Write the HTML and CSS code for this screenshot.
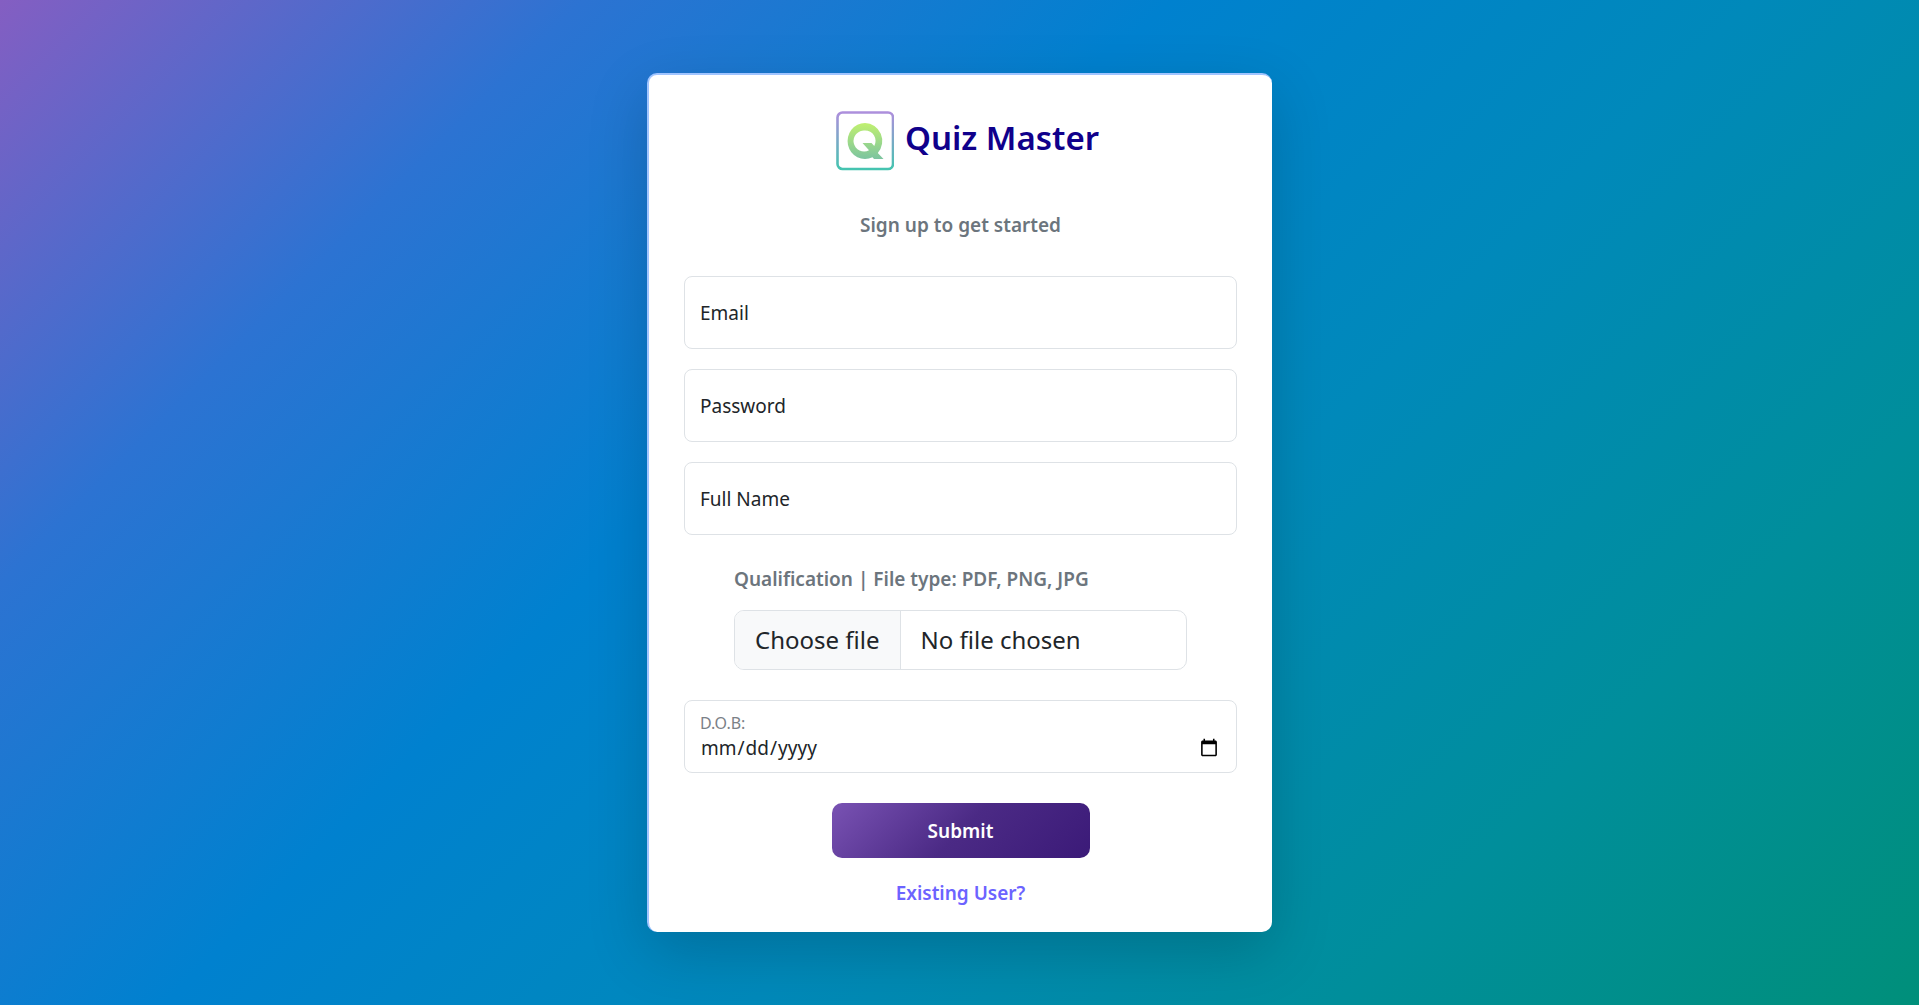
FILE: index.html
```html
<!DOCTYPE html>
<html lang="en">
<head>
<meta charset="utf-8">
<meta name="viewport" content="width=device-width, initial-scale=1">
<title>Quiz Master - Sign up</title>
<link rel="stylesheet" href="styles.css">
</head>
<body>
<main class="card">
  <header class="brand">
    <svg class="brand-logo" viewBox="0 0 58 60" aria-hidden="true">
      <defs>
        <linearGradient id="frame" x1="0" y1="0" x2="0" y2="1">
          <stop offset="0" stop-color="#ad8fdc"/>
          <stop offset="1" stop-color="#45c4b0"/>
        </linearGradient>
        <linearGradient id="letter" x1="0" y1="0" x2="0" y2="1">
          <stop offset="0" stop-color="#c0f070"/>
          <stop offset="1" stop-color="#7cc4a0"/>
        </linearGradient>
      </defs>
      <rect x="1.500" y="1.500" width="55.500" height="56.500" rx="5" fill="none" stroke="url(#frame)" stroke-width="2.600"/>
      <path fill="url(#letter)" fill-rule="evenodd" d="M29 12a17.500 18 0 1 0 7.500 34.300L38 48h9.500l-5.700-6A17.500 18 0 0 0 29 12Zm0 7.500a10.500 10.500 0 0 1 9.300 15.500L35.500 32h-9l6.500 7.200A10.500 10.500 0 1 1 29 19.500Z"/>
    </svg>
    <h1 class="brand-name">Quiz Master</h1>
  </header>
  <p class="lead">Sign up to get started</p>
  <form class="form">
    <div class="field">
      <input class="field-input" type="email" id="email">
      <label class="field-label" for="email">Email</label>
    </div>
    <div class="field">
      <input class="field-input" type="password" id="password">
      <label class="field-label" for="password">Password</label>
    </div>
    <div class="field">
      <input class="field-input" type="text" id="name">
      <label class="field-label" for="name">Full Name</label>
    </div>
    <div class="upload">
      <label class="upload-title" for="file">Qualification | File type: PDF, PNG, JPG</label>
      <div class="upload-box">
        <span class="upload-button">Choose file</span>
        <span class="upload-name">No file chosen</span>
        <input class="upload-input" type="file" id="file" accept=".pdf,.png,.jpg">
      </div>
    </div>
    <div class="field">
      <input class="field-input field-input-date" type="date" id="dob">
      <label class="field-label field-label-raised" for="dob">D.O.B:</label>
    </div>
    <button class="submit" type="submit">Submit</button>
    <a class="login-link" href="#">Existing User?</a>
  </form>
</main>
</body>
</html>
```
FILE: styles.css
```css
* {
  box-sizing: border-box;
}

body {
  display: flex;
  align-items: center;
  justify-content: center;
  min-height: 100vh;
  margin: 0;
  font-family: "Noto Sans", "Open Sans", sans-serif;
  font-size: 19px;
  line-height: 30px;
  color: #212529;
  background: linear-gradient(135deg, #845ec2, #2c73d2, #0081cf, #0089ba, #008e9b, #008f7a);
}

.card {
  width: 100%;
  max-width: 625px;
  padding: 36px 35px 24px;
  border: 0 solid #a0c4ff;
  border-width: 2px 0 0 2px;
  border-radius: 10px;
  background: #fff;
  box-shadow: 0 20px 60px rgba(0, 0, 0, 0.175);
}

.brand {
  display: flex;
  align-items: center;
  justify-content: center;
  gap: 11px;
  margin-left: 14px;
}

.brand-logo {
  width: 58px;
  height: 60px;
}

.brand-name {
  margin: 0 0 6px;
  font-size: 33px;
  line-height: 44px;
  font-weight: 600;
  color: #10008b;
}

.lead {
  margin: 39px 0 36px;
  text-align: center;
  font-weight: 600;
  color: #6c757d;
}

.form {
  display: flex;
  flex-direction: column;
  gap: 20px;
}

.field {
  display: grid;
}

.field-input {
  grid-area: 1 / 1;
  width: 100%;
  height: 73px;
  padding: 20px 15px;
  border: 1px solid #dee2e6;
  border-radius: 8px;
  background: #fff;
  color: inherit;
  font: inherit;
}

.field-input-date {
  padding: 32px 15px 10px;
}

.field-input-date::-webkit-datetime-edit-fields-wrapper {
  padding: 0;
}

.field-input-date::-webkit-datetime-edit {
  padding: 0;
}

.field-input-date::-webkit-calendar-picker-indicator {
  width: 20px;
  height: 20px;
}

.field-label {
  grid-area: 1 / 1;
  align-self: center;
  justify-self: start;
  padding-left: 16px;
  pointer-events: none;
}

.field-label-raised {
  align-self: start;
  padding-top: 8px;
  font-size: 16px;
  color: #7b8187;
}

.upload {
  display: flex;
  flex-direction: column;
  gap: 16px;
  margin: 9px 50px 10px;
}

.upload-title {
  font-weight: 600;
  color: #6c757d;
}

.upload-box {
  position: relative;
  display: flex;
  height: 60px;
  border: 1px solid #dee2e6;
  border-radius: 10px;
  overflow: hidden;
  font-size: 24px;
  line-height: 58px;
}

.upload-button {
  padding: 0 20px;
  border-right: 1px solid #dee2e6;
  background: #f8f9fa;
}

.upload-name {
  padding: 0 20px;
}

.upload-input {
  position: absolute;
  inset: 0;
  width: 100%;
  opacity: 0;
}

.submit {
  align-self: center;
  width: 258px;
  height: 55px;
  margin-top: 10px;
  border: 0;
  border-radius: 10px;
  background: linear-gradient(135deg, #7952b3, #4b2a85 50%, #3b1a78);
  color: #fff;
  font: inherit;
  font-weight: 600;
}

.login-link {
  align-self: center;
  color: #6c63ff;
  font-weight: 600;
  text-decoration: none;
}
```
